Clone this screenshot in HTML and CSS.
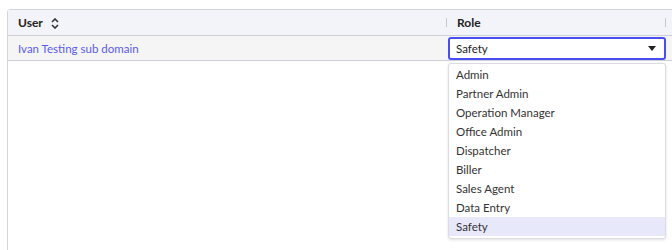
FILE: index.html
```html
<!DOCTYPE html>
<html lang="en">
  <head>
    <meta charset="UTF-8" />
    <meta name="viewport" content="width=device-width, initial-scale=1.0" />
    <title>Users</title>
    <link rel="stylesheet" href="styles.css">
  </head>
  <body>
    <div class="page">
      <div class="grid">
        <!-- Header -->
        <div class="row head">
          <div class="cell col-user">
            <span>User</span>
            <svg class="sort" width="8" height="11" viewBox="0 0 8 11">
              <path d="M1 4 L4 1 L7 4 M1 7 L4 10 L7 7" fill="none" stroke="#333" stroke-width="1.6" />
            </svg>
          </div>
          <div class="cell col-role"><span class="sep"></span><span>Role</span><span class="sep end"></span></div>
          <div class="cell col-rest"></div>
        </div>

        <div class="row body">
          <div class="cell col-user"><a href="#" class="user-link">Ivan Testing sub domain</a></div>
          <div class="cell col-role">
            <div class="select-wrap">
              <div class="select">
                <span>Safety</span>
                <span class="caret"></span>
              </div>
              <ul class="menu">
                <li>Admin</li>
                <li>Partner Admin</li>
                <li>Operation Manager</li>
                <li>Office Admin</li>
                <li>Dispatcher</li>
                <li>Biller</li>
                <li>Sales Agent</li>
                <li>Data Entry</li>
                <li class="active">Safety</li>
              </ul>
            </div>
          </div>
          <div class="cell col-rest"></div>
        </div>
      </div>
    </div>
  </body>
</html>
```

FILE: styles.css
```css
body {
  margin: 0;
  font-family: Lato, sans-serif;
  font-size: 11.5px;
  color: #333;
  background: #fff;
}

.page {
  height: 250px;
  padding: 9px 0 0 7px;
  box-sizing: border-box;
  overflow: hidden;
}

.grid {
  width: 680px;
  height: 260px;
  border: 1px solid #d3d3db;
  border-right: none;
  border-radius: 4px 0 0 0;
}

.row {
  display: flex;
  border-bottom: 1px solid #cfcfd8;
}

.head {
  height: 25px;
  background: #f3f4f9;
  font-weight: bold;
  font-size: 12px;
  color: #222;
}

.body {
  height: 24px;
  background: #f5f5f6;
}

.cell {
  display: flex;
  align-items: center;
  box-sizing: border-box;
}

.col-user {
  width: 438px;
  padding-left: 10px;
  gap: 8px;
}

.col-role {
  width: 220px;
}

.head .col-role {
  gap: 10px;
}

.col-rest {
  flex: 1;
}

.sort {
  margin-top: 1px;
}

.sep {
  width: 1px;
  height: 9px;
  background: #c8c8cc;
}

.sep.end {
  margin-left: auto;
}

.user-link {
  color: #5a5af0;
  text-decoration: none;
}

.select-wrap {
  position: relative;
  margin-left: 2px;
  width: 218px;
}

.select {
  height: 23px;
  box-sizing: border-box;
  border: 2px solid #4a4ef0;
  border-radius: 3px;
  background: #fff;
  display: flex;
  align-items: center;
  padding: 0 8px 0 6px;
  color: #222;
}

.caret {
  margin-left: auto;
  width: 0;
  height: 0;
  border-left: 4px solid transparent;
  border-right: 4px solid transparent;
  border-top: 5px solid #222;
}

.menu {
  position: absolute;
  top: 26px;
  left: 0;
  width: 216px;
  margin: 0;
  padding: 1px 0 2px;
  list-style: none;
  background: #fff;
  border: 1px solid #dcdce2;
  border-radius: 3px;
  box-shadow: 0 1px 3px rgba(0, 0, 0, 0.12);
}

.menu li {
  height: 19.1px;
  line-height: 19px;
  padding-left: 7px;
  color: #333;
}

.menu li.active {
  background: #e7e8fa;
}
```
